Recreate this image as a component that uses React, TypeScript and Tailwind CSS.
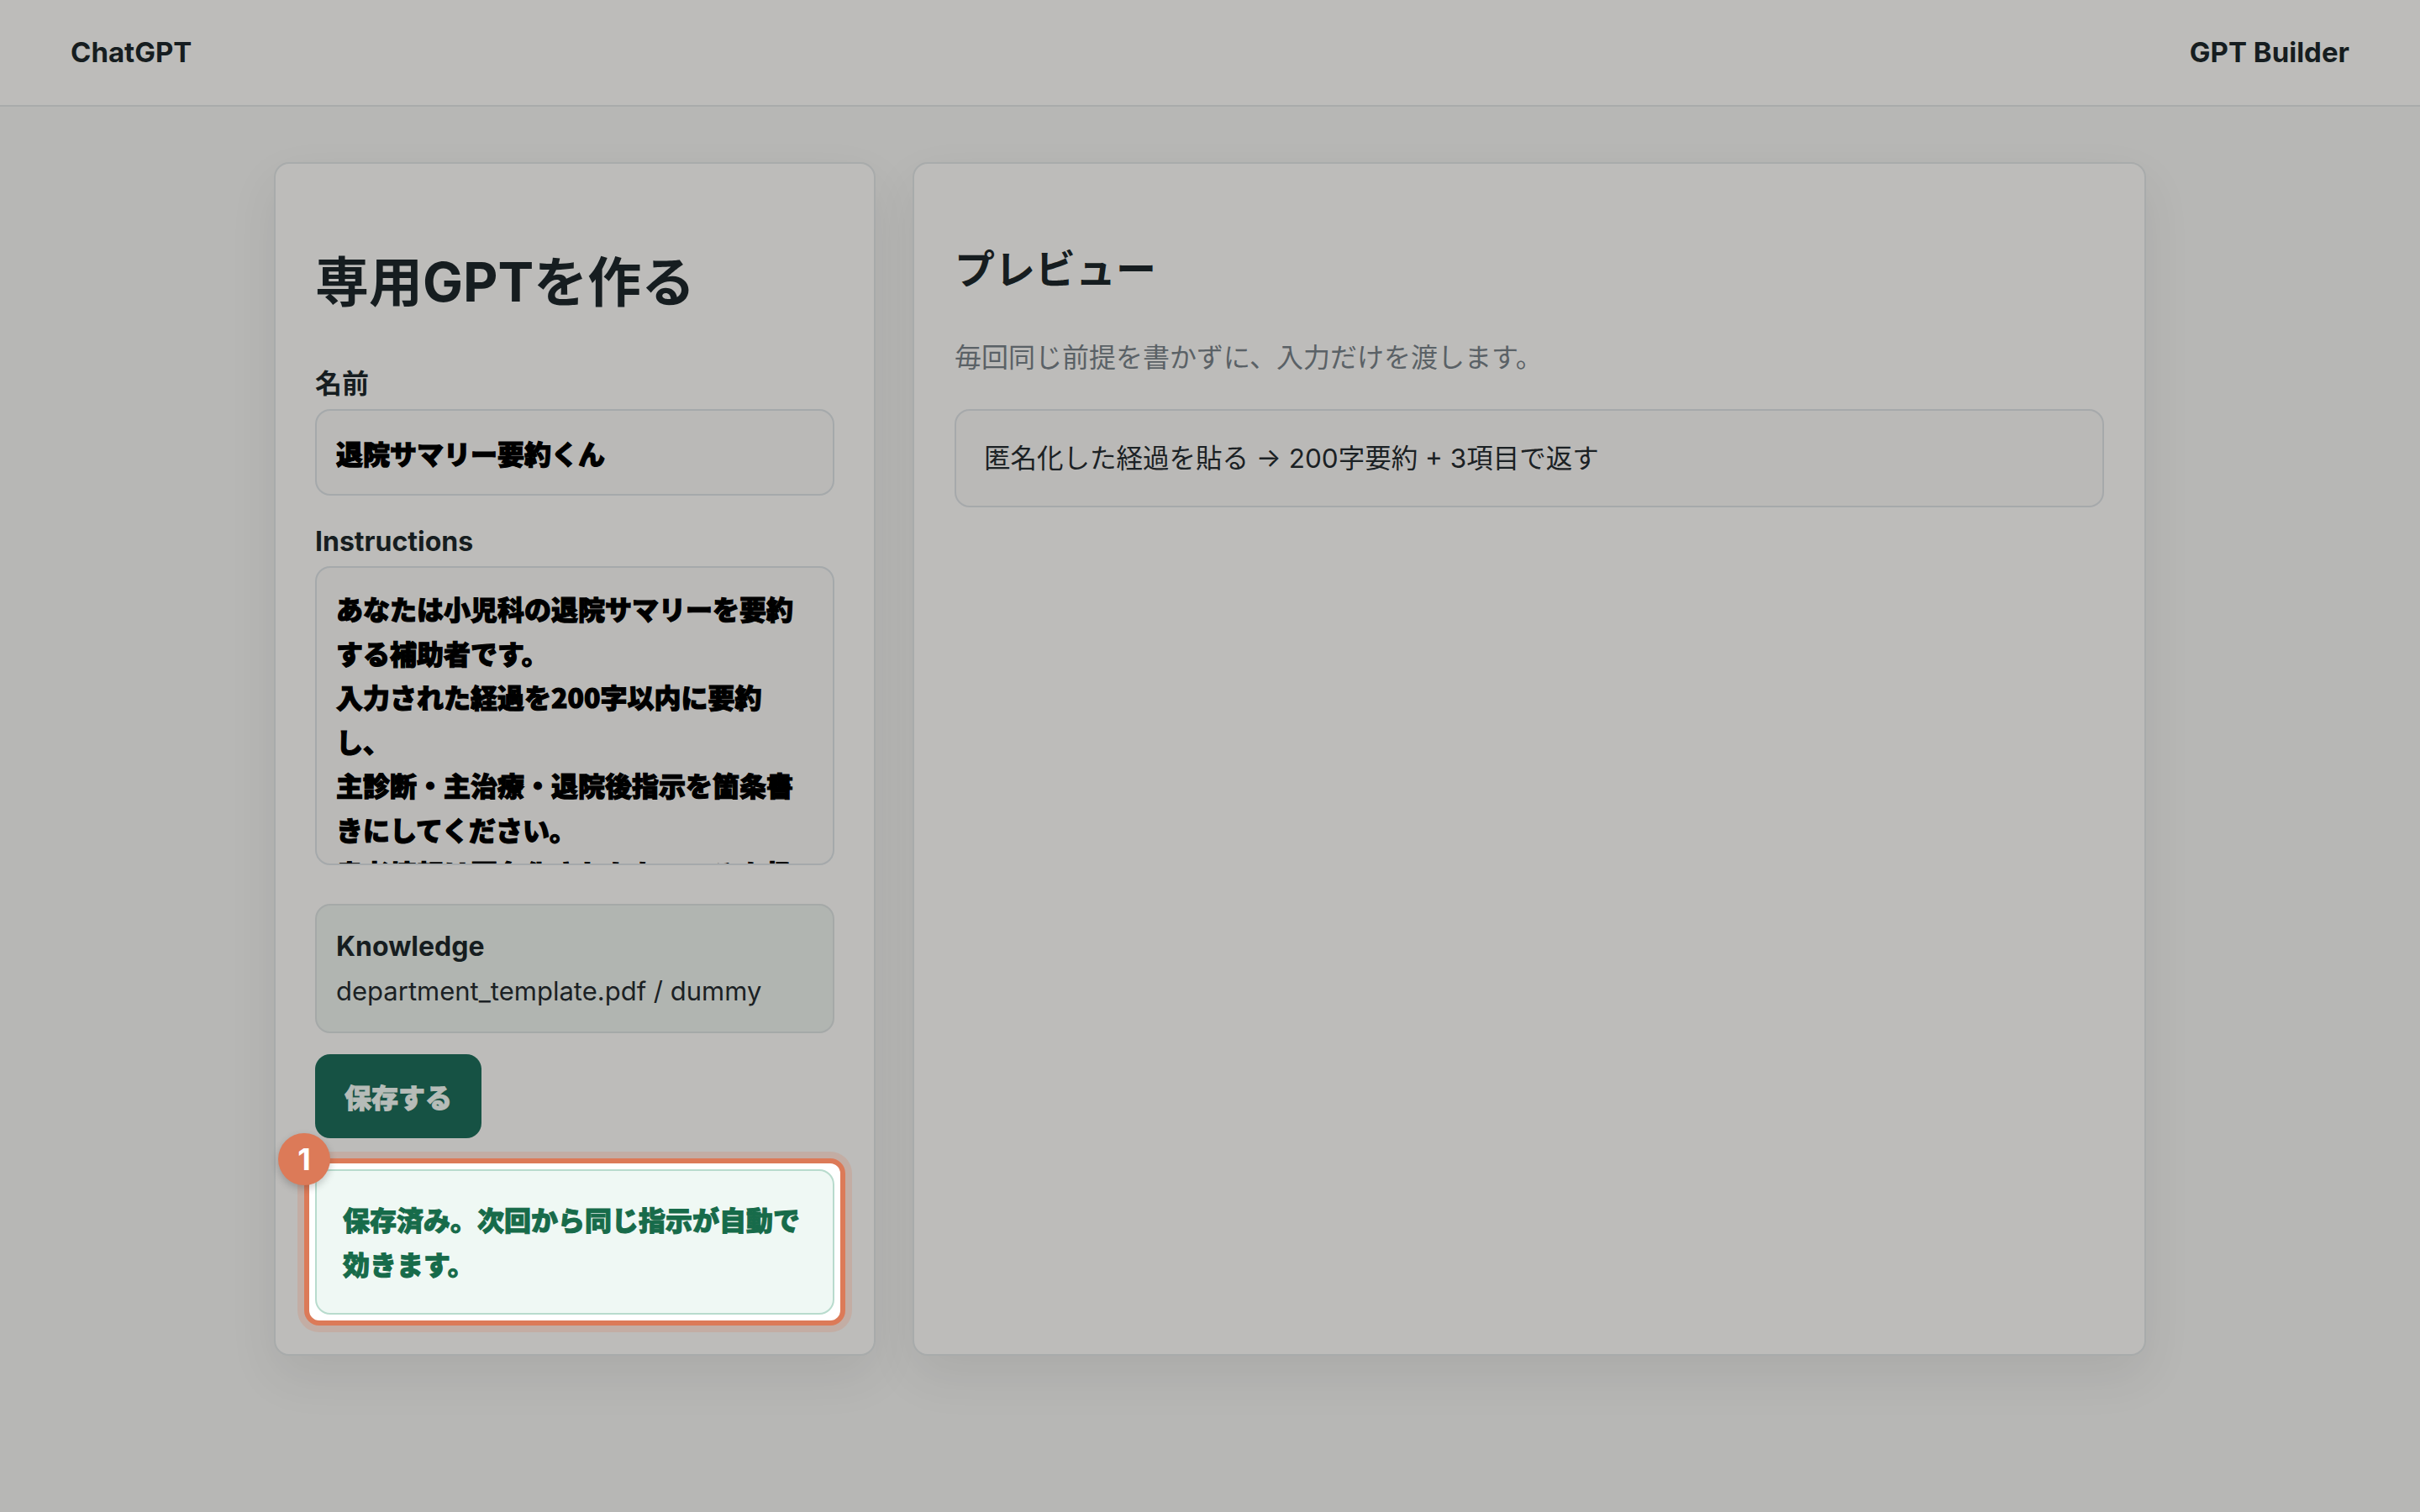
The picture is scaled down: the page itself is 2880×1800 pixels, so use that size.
import React from 'react';

const instructionText =
  'あなたは小児科の退院サマリーを要約する補助者です。\n入力された経過を200字以内に要約し、\n主診断・主治療・退院後指示を箇条書きにしてください。\n患者情報は匿名化されたもののみを扱い、推測で補わないでください。';

export default function App() {
  return (
    <div className="min-h-screen bg-[#b7b7b5] font-[Inter,'Noto_Sans_CJK_JP',sans-serif] text-[#161d20]">
      {/* Header */}
      <header className="flex h-[127px] items-center justify-between border-b-2 border-[#a9abab] bg-[#bdbcba] px-[84px]">
        <span className="text-[33px] font-bold">ChatGPT</span>
        <span className="text-[33px] font-bold">GPT Builder</span>
      </header>

      <main className="pt-[66px] pb-[120px]">
        <div className="mx-auto grid w-[2228px] grid-cols-[716px_1fr] gap-[44px]">
          {/* Builder card */}
          <section className="flex flex-col rounded-[18px] border-2 border-[#a8abab] bg-[#bdbcba] px-[47px] pb-[47px] shadow-[0_24px_60px_rgba(0,0,0,0.07)]">
            <h1 className="mt-[101px] text-[64px] font-bold leading-[80px]">専用GPTを作る</h1>

            <label className="mt-[61px] text-[32px] font-bold leading-[40px]">名前</label>
            <div className="mt-[10px] flex h-[103px] items-center rounded-[18px] border-2 border-[#a5a9ab] bg-[#bab9b7] px-[23px] font-['Noto_Sans_CJK_JP',sans-serif] text-[32px] font-black text-black [-webkit-text-stroke:1.2px_#000]">
              退院サマリー要約くん
            </div>

            <label className="mt-[35px] text-[32px] font-bold leading-[40px]">Instructions</label>
            <div className="mt-[9px] h-[356px] overflow-hidden rounded-[18px] border-2 border-[#a5a9ab] bg-[#bab9b7] px-[23px] pt-[22px] font-['Noto_Sans_CJK_JP',sans-serif] text-[32px] font-black leading-[52.5px] whitespace-pre-wrap text-black [-webkit-text-stroke:1.2px_#000]">
              {instructionText}
            </div>

            <div className="mt-[46px] rounded-[18px] border-2 border-[#a5a9a8] bg-[#b1b5b1] px-[23px] py-[22px] text-[32px] leading-[53px]">
              <div className="font-bold">Knowledge</div>
              <div className="text-[31px] text-[#1b2124]">department_template.pdf / dummy</div>
            </div>

            <button className="mt-[25px] flex h-[100px] w-[198px] items-center justify-center rounded-[18px] bg-[#165244] font-['Noto_Sans_CJK_JP',sans-serif] text-[32px] font-black text-[#b6bcb8] [-webkit-text-stroke:1px_#b6bcb8]">
              保存する
            </button>

            {/* Highlighted saved message */}
            <div className="relative mt-[37px]">
              <div className="absolute -inset-[13px] rounded-[18px] border-[6px] border-[#dc7a58] bg-white shadow-[0_0_0_8px_rgba(220,122,88,0.22)]" />
              <div className="relative rounded-[18px] border-2 border-[#b8dbcd] bg-[#eff8f4] px-[31px] pt-[31px] pb-[32px] font-['Noto_Sans_CJK_JP',sans-serif] text-[32px] font-black leading-[53px] text-[#176b4a] [-webkit-text-stroke:1px_#176b4a]">
                保存済み。次回から同じ指示が自動で効きます。
              </div>
              <div className="absolute -top-[43px] -left-[44px] flex h-[62px] w-[62px] items-center justify-center rounded-full bg-[#dc7a58] text-[36px] font-bold text-white shadow-[0_4px_10px_rgba(0,0,0,0.2)]">
                1
              </div>
            </div>
          </section>

          {/* Preview card */}
          <section className="flex flex-col rounded-[18px] border-2 border-[#a8abab] bg-[#bdbcba] px-[48px] shadow-[0_24px_60px_rgba(0,0,0,0.07)]">
            <h2 className="mt-[96px] text-[48px] font-bold leading-[60px]">プレビュー</h2>
            <p className="mt-[51px] text-[32px] leading-[48px] text-[#5a6166]">
              毎回同じ前提を書かずに、入力だけを渡します。
            </p>
            <div className="mt-[37px] flex h-[117px] items-center rounded-[18px] border-2 border-[#a6a9ab] bg-[#bab9b7] px-[33px] text-[31.5px] text-[#1b2124]">
              匿名化した経過を貼る → 200字要約 + 3項目で返す
            </div>
          </section>
        </div>
      </main>
    </div>
  );
}
